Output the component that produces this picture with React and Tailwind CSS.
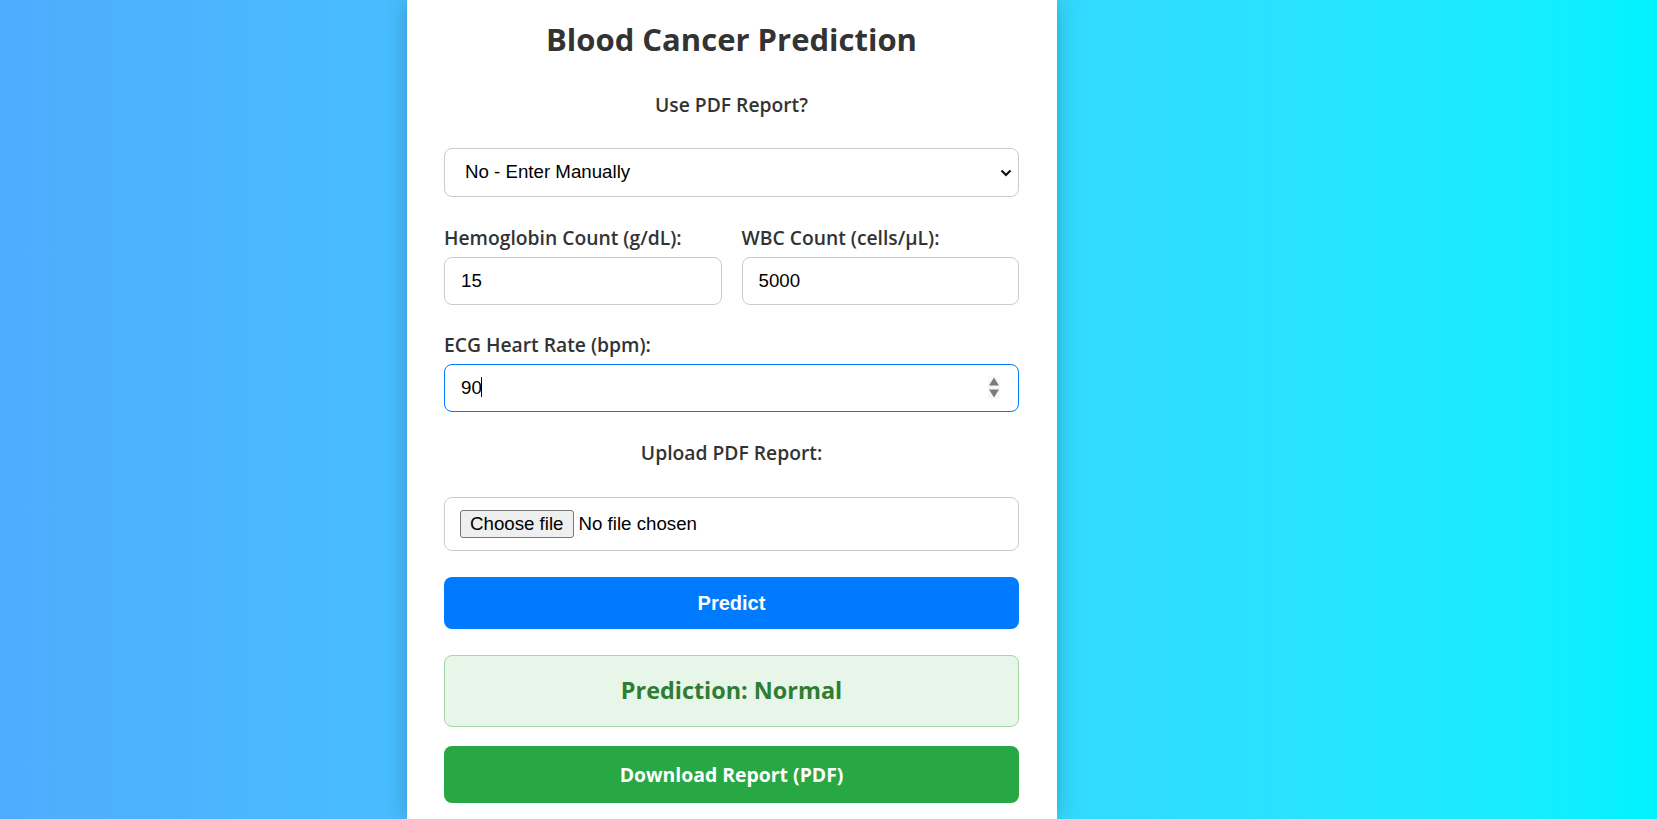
import { useState } from "react";

const heading = { fontFamily: '"Open Sans", "Noto Sans", sans-serif' };
const arial = { fontFamily: '"Liberation Sans", Arial, sans-serif' };

function Spinner() {
  return (
    <svg width="12" height="23" viewBox="0 0 12 23" className="absolute right-[19px] top-[12px] pointer-events-none">
      <rect x="0" y="0" width="12" height="23" fill="#f7f7f7" />
      <path d="M6 1.5 L11 9.5 L1 9.5 Z" fill="#7b7b7b" />
      <path d="M1 13.5 L11 13.5 L6 21.5 Z" fill="#7b7b7b" />
    </svg>
  );
}

export default function App() {
  const [usePdf, setUsePdf] = useState("no");
  const [hemoglobin, setHemoglobin] = useState("15");
  const [wbc, setWbc] = useState("5000");
  const [heartRate, setHeartRate] = useState("90");

  const inputCls =
    "w-full h-[48px] border border-[#cccccc] rounded-lg pl-[16px] pr-3 text-[18.7px] text-black bg-white outline-none";
  const labelCls = "block text-[19.3px] leading-[24px] font-semibold";

  return (
    <div className="h-[819px] overflow-hidden bg-gradient-to-r from-[#4facfe] to-[#00f2fe] flex">
      <div
        className="ml-[407px] w-[650px] bg-white shadow-[0_0_22px_rgba(0,0,0,0.22)] pl-[37px] pr-[38px] pt-[19px] text-[#333333]"
        style={heading}
      >
        <h1 className="text-[31px] leading-[40px] font-bold text-center">Blood Cancer Prediction</h1>

        <label className={`${labelCls} mt-[34px] text-center`}>Use PDF Report?</label>
        <div className="relative mt-[31px]">
          <select
            className="w-full h-[49px] appearance-none border border-[#cccccc] rounded-lg pl-[20px] pr-10 text-[18.7px] text-black bg-white outline-none"
            style={arial}
            value={usePdf}
            onChange={(e) => setUsePdf(e.target.value)}
          >
            <option value="no">No - Enter Manually</option>
            <option value="yes">Yes - Upload PDF</option>
          </select>
          <svg
            width="12"
            height="8"
            viewBox="0 0 12 8"
            className="absolute right-[7px] top-[21px] pointer-events-none"
          >
            <path d="M1.5 1.5 L6 6 L10.5 1.5" fill="none" stroke="#111" strokeWidth="2.2" />
          </svg>
        </div>

        {/* Manual values */}
        <div className="grid grid-cols-2 gap-5 mt-[29px]">
          <div>
            <label className={`${labelCls} mb-[7px]`}>Hemoglobin Count (g/dL):</label>
            <input
              className={inputCls}
              style={arial}
              value={hemoglobin}
              onChange={(e) => setHemoglobin(e.target.value)}
            />
          </div>
          <div>
            <label className={`${labelCls} mb-[7px]`}>WBC Count (cells/µL):</label>
            <input
              className={inputCls}
              style={arial}
              value={wbc}
              onChange={(e) => setWbc(e.target.value)}
            />
          </div>
        </div>

        <div className="mt-[28px]">
          <label className={`${labelCls} mb-[7px]`}>ECG Heart Rate (bpm):</label>
          <div className="relative">
            <input
              className="w-full h-[48px] border border-[#007bff] rounded-lg pl-[16px] pr-10 text-[18.7px] text-black bg-white outline-none caret-transparent"
              style={arial}
              value={heartRate}
              onChange={(e) => setHeartRate(e.target.value)}
            />
            {/* caret of the focused field */}
            <span className="absolute left-[37px] top-[13px] w-px h-[20px] bg-black pointer-events-none" />
            <Spinner />
          </div>
        </div>

        <label className={`${labelCls} mt-[29px] text-center`}>Upload PDF Report:</label>
        <label
          className="mt-[32px] h-[54px] border border-[#cccccc] rounded-lg pl-[15px] flex items-center gap-[5px] text-[18.7px] text-black cursor-pointer"
          style={arial}
        >
          <input type="file" accept="application/pdf" className="hidden" />
          <span className="h-[28px] px-[9px] flex items-center border border-[#767676] rounded-[3px] bg-[#efefef]">
            Choose file
          </span>
          <span>No file chosen</span>
        </label>

        <button
          className="mt-[26px] w-full h-[52px] rounded-lg bg-[#007bff] text-white text-[20px] font-bold"
          style={arial}
        >
          Predict
        </button>

        <div className="mt-[26px] h-[72px] rounded-lg border border-[#a5d6a7] bg-[#e8f5e9] flex items-center justify-center">
          <h3 className="text-[23.4px] font-bold text-[#2e7d32]">Prediction: Normal</h3>
        </div>

        <button className="mt-[19px] w-full h-[57px] rounded-lg bg-[#28a745] text-white text-[19.4px] font-bold">
          Download Report (PDF)
        </button>
        <div className="h-10" />
      </div>
    </div>
  );
}
